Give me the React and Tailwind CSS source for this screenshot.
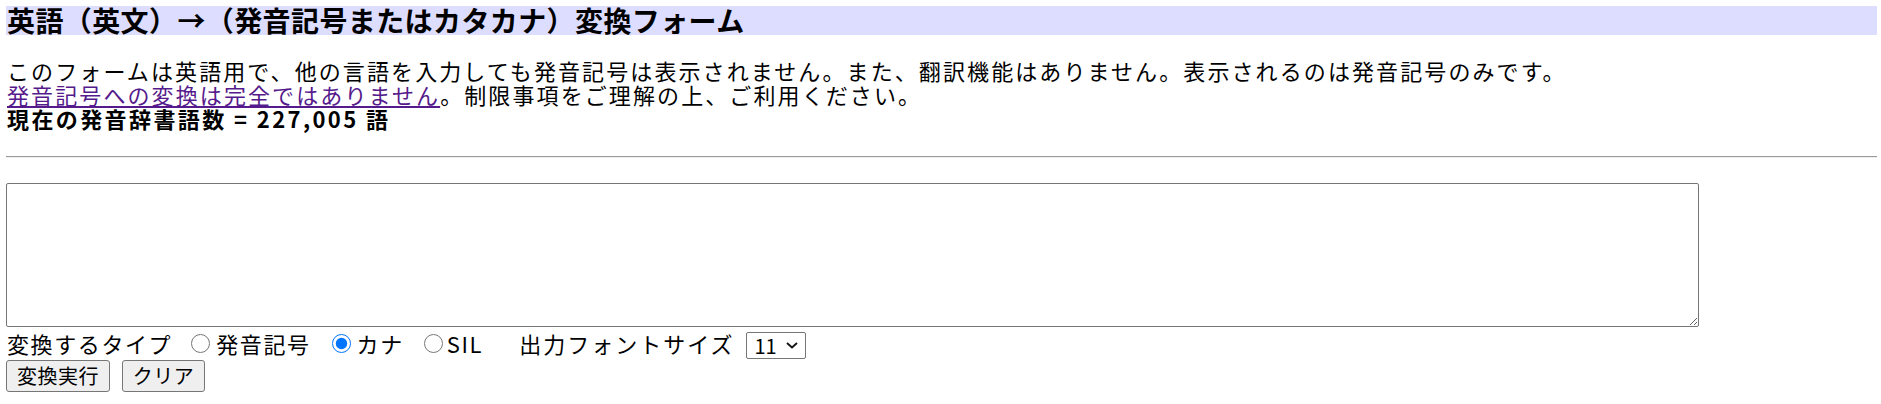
import React from "react";

export default function App() {
  const jp = { fontFamily: '"Noto Sans CJK JP", "Noto Sans", sans-serif' };
  return (
    <div className="pt-[6px] pl-[6px] pr-[4px] text-black bg-white" style={jp}>
      <h1 className="h-[29px] bg-[#ddddff] text-[28px] leading-[29px] font-bold pl-[1px] tracking-[0.4px] whitespace-nowrap">
        英語（英文）→（発音記号またはカタカナ）変換フォーム
      </h1>
      <div className="mt-[23px] text-[22px] leading-[24px] tracking-[2.1px] pl-[1px]">
        <div className="whitespace-nowrap">
          このフォームは英語用で、他の言語を入力しても発音記号は表示されません。また、翻訳機能はありません。表示されるのは発音記号のみです。
        </div>
        <div className="whitespace-nowrap">
          <a href="#" className="text-[#551a8b] underline">
            発音記号への変換は完全ではありません
          </a>
          。制限事項をご理解の上、ご利用ください。
        </div>
        <div className="whitespace-nowrap font-bold tracking-[2.4px]">現在の発音辞書語数 = 227,005 語</div>
      </div>
      <hr className="mt-[26px] border-0 border-t border-t-[#9a9a9a] border-b border-b-[#eeeeee]" />
      <textarea className="block mt-[25px] w-[1693px] h-[144px] border border-[#767676] rounded-[2px]" />
      <div className="flex items-center h-[33px] text-[22px] tracking-[1.6px] whitespace-nowrap pl-[1px]">
        <span>変換するタイプ</span>
        <input type="radio" name="t" className="ml-[19px] w-[19px] h-[19px] m-0" />
        <span className="ml-[6px]">発音記号</span>
        <input type="radio" name="t" defaultChecked className="ml-[21px] w-[19px] h-[19px] m-0" />
        <span className="ml-[6px]">カナ</span>
        <input type="radio" name="t" className="ml-[20px] w-[19px] h-[19px] m-0" />
        <span className="ml-[4px]">SIL</span>
        <span className="ml-[36px] tracking-[2px]">出力フォントサイズ</span>
        <div className="relative ml-[12px] w-[60px] h-[27px] self-start mt-[5px]">
          <select
            defaultValue="11"
            className="appearance-none block w-full h-full border border-[#767676] rounded-[2px] text-[20px] leading-none tracking-normal pl-[7px] text-black bg-white"
          >
            <option>9</option>
            <option>10</option>
            <option>11</option>
            <option>12</option>
          </select>
          <svg
            className="pointer-events-none absolute right-[8px] top-[10px]"
            width="12"
            height="7"
            viewBox="0 0 12 7"
            fill="none"
          >
            <path d="M1 1 L6 5.5 L11 1" stroke="#111" strokeWidth="1.8" />
          </svg>
        </div>
      </div>
      <div className="flex gap-[12px]">
        <button className="h-[32px] w-[104px] bg-[#efefef] border border-[#767676] rounded-[3px] text-[20px] leading-none tracking-[0.5px]">
          変換実行
        </button>
        <button className="h-[32px] w-[83px] bg-[#efefef] border border-[#767676] rounded-[3px] text-[20px] leading-none tracking-[0.5px]">
          クリア
        </button>
      </div>
    </div>
  );
}
